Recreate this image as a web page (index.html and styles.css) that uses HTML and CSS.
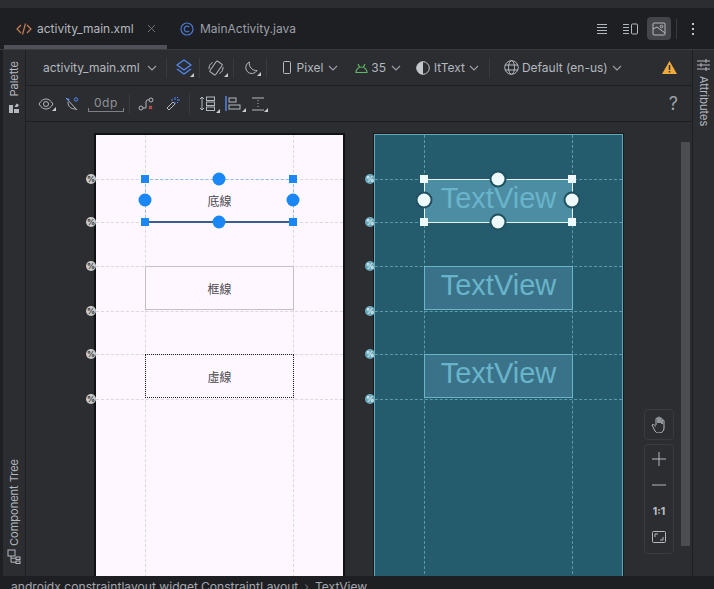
FILE: index.html
```html
<!DOCTYPE html>
<html lang="en">
  <head>
    <meta charset="UTF-8" />
    <title>activity_main.xml</title>
    <link rel="stylesheet" href="styles.css">
  </head>
  <body>
    <div class="top_strip"></div>
    <div class="tabs">
      <div class="tab tab_active">
        <svg class="tab_code" width="16" height="14" viewBox="0 0 16 14"><path d="M5 3 1 7l4 4M11 3l4 4-4 4M9.500 1.500l-3 11"/></svg>
        <span>activity_main.xml</span>
        <svg class="tab_close" width="9" height="9" viewBox="0 0 9 9"><path d="M1 1l7 7M8 1 1 8"/></svg>
      </div>
      <div class="tab tab_java">
        <svg class="tab_class" width="14" height="14" viewBox="0 0 14 14"><circle cx="7" cy="7" r="6"/><path d="M9.200 5.200a2.800 2.800 0 1 0 0 3.600"/></svg>
        <span>MainActivity.java</span>
      </div>
      <div class="tab_tools">
        <svg class="ic" width="12" height="12" viewBox="0 0 12 12"><path d="M1 1.500h10M1 4.500h10M1 7.500h10M1 10.500h10"/></svg>
        <svg class="ic tool_split" width="16" height="12" viewBox="0 0 16 12"><path d="M1 1.500h6M1 4.500h6M1 7.500h6M1 10.500h6"/><rect x="9.500" y="1" width="6" height="10" rx="1"/></svg>
        <div class="tool_active">
          <svg class="ic" width="14" height="14" viewBox="0 0 14 14"><rect x="1" y="1" width="12" height="12" rx="1"/><path d="M1 7l4-2 8 6"/><circle cx="9.500" cy="4.500" r="1.300"/></svg>
        </div>
        <div class="tool_sep"></div>
        <div class="tool_dots"><i></i><i></i><i></i></div>
      </div>
    </div>

    <div class="main">
      <div class="rail rail_left">
        <div class="rail_group">
          <span class="rail_label">Palette</span>
          <svg class="rail_palette" width="12" height="12" viewBox="0 0 12 12"><path d="M1 11V3h4v8zM6 11V7h5v4zM6.500 5l2-3.500 2.500 1.500-1.500 2z"/></svg>
        </div>
        <div class="rail_group rail_group_tree">
          <span class="rail_label">Component Tree</span>
          <svg class="ic rail_tree" width="14" height="15" viewBox="0 0 14 15"><rect x="1" y="1" width="7" height="6"/><rect x="9" y="8" width="4" height="2.500"/><rect x="9" y="12" width="4" height="2.500"/><path d="M4 7v6.200h5M4 9.200h5"/></svg>
        </div>
      </div>

      <div class="center">
        <div class="toolbar">
          <div class="tb tb_file"><span>activity_main.xml</span><svg class="chev" width="10" height="6" viewBox="0 0 10 6"><path d="M1 1l4 4 4-4"/></svg></div>
          <div class="sep"></div>
          <div class="tb tb_layers">
            <svg class="ic_blue" width="16" height="17" viewBox="0 0 16 17"><path d="M8 1l7 5-7 5-7-5zM1 10l7 5 7-5"/></svg>
            <b class="corner"></b>
          </div>
          <div class="sep"></div>
          <div class="tb tb_rotate">
            <svg class="ic" width="16" height="16" viewBox="0 0 16 16"><rect x="4.500" y="1.500" width="7" height="13" rx="1" transform="rotate(35 8 8)"/><path d="M1 9a7 7 0 0 1 3.500-6.500M15 7a7 7 0 0 1-3.500 6.500"/></svg>
            <b class="corner"></b>
          </div>
          <div class="sep"></div>
          <div class="tb tb_moon">
            <svg class="ic" width="14" height="14" viewBox="0 0 14 14"><path d="M5.500 1a6 6 0 1 0 7.500 8.500A7 7 0 0 1 5.500 1z"/></svg>
            <b class="corner"></b>
          </div>
          <div class="sep"></div>
          <div class="tb tb_pixel">
            <svg class="ic" width="8" height="13" viewBox="0 0 8 13"><rect x=".5" y=".5" width="7" height="12" rx="1"/></svg>
            <span>Pixel</span>
            <svg class="chev" width="10" height="6" viewBox="0 0 10 6"><path d="M1 1l4 4 4-4"/></svg>
          </div>
          <div class="tb tb_api">
            <svg class="ic_green" width="13" height="10" viewBox="0 0 13 10"><path d="M1 9.500a5.500 5.500 0 0 1 11 0zM3 1l1.500 3M10 1 8.500 4"/></svg>
            <span>35</span>
            <svg class="chev" width="10" height="6" viewBox="0 0 10 6"><path d="M1 1l4 4 4-4"/></svg>
          </div>
          <div class="tb tb_theme">
            <svg width="14" height="14" viewBox="0 0 14 14"><circle class="half_ring" cx="7" cy="7" r="6.300"/><path class="half_fill" d="M7 .7a6.300 6.300 0 0 0 0 12.600z"/></svg>
            <span>ltText</span>
            <svg class="chev" width="10" height="6" viewBox="0 0 10 6"><path d="M1 1l4 4 4-4"/></svg>
          </div>
          <div class="sep"></div>
          <div class="tb tb_locale">
            <svg class="ic" width="15" height="15" viewBox="0 0 15 15"><circle cx="7.500" cy="7.500" r="6.800"/><ellipse cx="7.500" cy="7.500" rx="3" ry="6.800"/><path d="M1 5h13M1 10h13"/></svg>
            <span>Default (en-us)</span>
            <svg class="chev" width="10" height="6" viewBox="0 0 10 6"><path d="M1 1l4 4 4-4"/></svg>
          </div>
          <svg class="warn" width="15" height="13" viewBox="0 0 15 13"><path class="warn_bg" d="M7.500 0 15 13H0z"/><path class="warn_mark" d="M7.500 4v5M7.500 10v1.500"/></svg>
        </div>

        <div class="toolbar toolbar_second">
          <div class="tb tb_eye">
            <svg class="ic" width="16" height="12" viewBox="0 0 16 12"><path d="M1 6c2-3.500 4.500-5 7-5s5 1.500 7 5c-2 3.500-4.500 5-7 5S3 9.500 1 6z"/><circle cx="8" cy="6" r="2.500"/></svg>
            <b class="corner"></b>
          </div>
          <div class="tb tb_magnet">
            <svg width="14" height="14" viewBox="0 0 14 14"><path class="mag_line" d="M1 1l11 12M3 5c0 5 3 7 8 7"/><path class="mag_tip" d="M1 1l4 1-2 2z"/><circle class="mag_tip_ring" cx="11" cy="2.500" r="1.700"/></svg>
          </div>
          <div class="tb_margin">
            <span>0dp</span>
            <i class="margin_scale"></i>
          </div>
          <div class="sep"></div>
          <div class="tb tb_path">
            <svg width="16" height="14" viewBox="0 0 16 14"><circle class="path_dot" cx="3" cy="11" r="2"/><circle class="path_dot" cx="13" cy="3" r="2"/><path class="path_dot" d="M5 11h3V5a2 2 0 0 1 3-2"/><path class="path_x" d="M11 9l3 3M14 9l-3 3"/></svg>
          </div>
          <div class="tb tb_wand">
            <svg width="14" height="14" viewBox="0 0 14 14"><path class="path_dot" d="M1 11l6-6 2 2-6 6z"/><path class="wand_spark" d="M9 0v3M9 5v2M5 3h2M11 3h3M12 0l-1 1M12 6l-1-1"/></svg>
          </div>
          <div class="sep"></div>
          <div class="tb tb_pack">
            <svg class="ic" width="16" height="16" viewBox="0 0 16 16"><path d="M3 1v13M1 3l2-2 2 2M1 12l2 2 2-2"/><rect x="7.500" y="1" width="8" height="3.500"/><rect x="7.500" y="6" width="8" height="3.500"/><rect x="7.500" y="11" width="8" height="3.500"/></svg>
            <b class="corner"></b>
          </div>
          <div class="tb tb_align">
            <svg width="16" height="15" viewBox="0 0 16 15"><path class="align_bar" d="M1 0v15"/><rect class="path_dot" x="4" y="2" width="7" height="4"/><rect class="path_dot" x="4" y="9" width="11" height="4"/></svg>
            <b class="corner"></b>
          </div>
          <div class="tb tb_guide">
            <svg class="ic" width="14" height="14" viewBox="0 0 14 14"><path d="M1 1h12M7 3v1M7 6v1M7 9v1M1 13h12"/></svg>
            <b class="corner"></b>
          </div>
          <span class="help">?</span>
        </div>

        <div class="canvas">
          <div class="surface device">
            <i class="guide_v col_a"></i><i class="guide_v col_b"></i>
            <i class="guide_h row_1"></i><i class="guide_h row_2"></i><i class="guide_h row_3"></i>
            <i class="guide_h row_4"></i><i class="guide_h row_5"></i><i class="guide_h row_6"></i>
            <i class="pct row_1">%</i><i class="pct row_2">%</i><i class="pct row_3">%</i>
            <i class="pct row_4">%</i><i class="pct row_5">%</i><i class="pct row_6">%</i>

            <div class="widget widget_1 w_under">底線</div>
            <div class="widget widget_2 w_frame">框線</div>
            <div class="widget widget_3 w_dotted">虛線</div>

            <i class="square col_a row_1"></i><i class="square col_b row_1"></i>
            <i class="square col_a row_2"></i><i class="square col_b row_2"></i>
            <i class="dot col_mid row_1"></i><i class="dot col_mid row_2"></i>
            <i class="dot col_a row_mid"></i><i class="dot col_b row_mid"></i>
          </div>

          <div class="surface blueprint">
            <i class="guide_v col_a"></i><i class="guide_v col_b"></i>
            <i class="guide_h row_1"></i><i class="guide_h row_2"></i><i class="guide_h row_3"></i>
            <i class="guide_h row_4"></i><i class="guide_h row_5"></i><i class="guide_h row_6"></i>
            <i class="pct row_1">%</i><i class="pct row_2">%</i><i class="pct row_3">%</i>
            <i class="pct row_4">%</i><i class="pct row_5">%</i><i class="pct row_6">%</i>

            <div class="widget widget_1 bp_selected">TextView</div>
            <div class="widget widget_2">TextView</div>
            <div class="widget widget_3">TextView</div>

            <i class="square col_a row_1"></i><i class="square col_b row_1"></i>
            <i class="square col_a row_2"></i><i class="square col_b row_2"></i>
            <i class="dot col_mid row_1"></i><i class="dot col_mid row_2"></i>
            <i class="dot col_a row_mid"></i><i class="dot col_b row_mid"></i>
          </div>

          <div class="scrollbar"></div>

          <div class="zoom_box zoom_hand">
            <svg class="ic" width="16" height="17" viewBox="0 0 16 17"><path d="M5 9V3a1 1 0 0 1 2 0v4-5a1 1 0 0 1 2 0v5-4a1 1 0 0 1 2 0v5-3a1 1 0 0 1 2 0v7c0 3-2 5-5 5-2 0-3-.500-4-2L1 9c1-1 2-.500 4 1.500"/></svg>
          </div>
          <div class="zoom_box zoom_tools">
            <svg class="ic" width="14" height="14" viewBox="0 0 14 14"><path d="M7 0v14M0 7h14"/></svg>
            <svg class="ic" width="14" height="2" viewBox="0 0 14 2"><path d="M0 1h14"/></svg>
            <span class="zoom_one">1:1</span>
            <svg class="ic" width="14" height="12" viewBox="0 0 14 12"><rect x=".5" y=".5" width="13" height="11" rx="1"/><path d="M3 6V3h3M11 6v3H8"/></svg>
          </div>
        </div>
      </div>

      <div class="rail rail_right">
        <svg class="ic" width="13" height="12" viewBox="0 0 13 12"><path d="M0 2h13M0 6h13M0 10h13M9 0v4M4 4v4M9 8v4"/></svg>
        <span class="rail_label_right">Attributes</span>
      </div>
    </div>

    <div class="statusbar">androidx.constraintlayout.widget.ConstraintLayout<span class="crumb">›</span>TextView</div>
  </body>
</html>
```

FILE: styles.css
```css
* {
  box-sizing: border-box;
}

html,
body {
  margin: 0;
  height: 100%;
}

body {
  width: 714px;
  height: 589px;
  overflow: hidden;
  display: flex;
  flex-direction: column;
  background-color: #1e1f22;
  color: #b4b8bf;
  font-family: "Inter", "Liberation Sans", sans-serif;
  font-size: 12px;
}

svg {
  display: block;
  flex: none;
}

.ic path,
.ic rect,
.ic circle,
.ic ellipse {
  fill: none;
  stroke: #b4b8bf;
  stroke-width: 1;
}

.ic_blue path {
  fill: none;
  stroke: #548af7;
  stroke-width: 1.2;
}

.ic_green path {
  fill: none;
  stroke: #5fb865;
  stroke-width: 1.2;
}

.top_strip {
  height: 8px;
  flex: none;
  background-color: #2b2d30;
}

/* tabs */
.tabs {
  height: 42px;
  flex: none;
  display: flex;
  align-items: flex-start;
  padding-left: 4px;
  background-color: #1e1f22;
  border-bottom: 1px solid #393b40;
}

.tab {
  height: 41px;
  display: flex;
  align-items: center;
}

.tab_active {
  width: 163px;
  padding-left: 12px;
  padding-top: 4px;
  border-bottom: 4px solid #4e5157;
}

.tab_active span {
  margin-left: 5px;
}

.tab_code path {
  fill: none;
  stroke: #c77d55;
  stroke-width: 1.2;
}

.tab_close {
  margin-left: 13px;
}

.tab_close path {
  fill: none;
  stroke: #6f737a;
}

.tab_java {
  padding-left: 13px;
}

.tab_java span {
  margin-left: 6px;
  color: #9da0a8;
}

.tab_class circle,
.tab_class path {
  fill: none;
  stroke: #4a78d0;
  stroke-width: 1.2;
}

.tab_tools {
  margin-left: auto;
  height: 41px;
  display: flex;
  align-items: center;
  padding-right: 20px;
}

.tool_split {
  margin-left: 14px;
}

.tool_active {
  width: 24px;
  height: 23px;
  margin-left: 9px;
  display: flex;
  align-items: center;
  justify-content: center;
  background-color: #43454a;
  border-radius: 4px;
}

.tool_sep {
  width: 1px;
  height: 20px;
  margin-left: 5px;
  background-color: #393b40;
}

.tool_dots {
  margin-left: 15px;
  display: flex;
  flex-direction: column;
  gap: 3px;
}

.tool_dots i {
  width: 2px;
  height: 2px;
  background-color: #c0c3c9;
}

/* main area */
.main {
  flex: 1;
  min-height: 0;
  display: flex;
}

.rail {
  flex: none;
  background-color: #2b2d30;
}

.rail_left {
  margin-left: 3px;
  width: 23px;
  display: flex;
  flex-direction: column;
  justify-content: space-between;
  align-items: center;
  padding: 11px 0 12px;
  border-right: 1px solid #1e1f22;
}

.rail_group {
  display: flex;
  flex-direction: column;
  align-items: center;
  gap: 5px;
}

.rail_group_tree {
  gap: 3px;
}

.rail_label {
  writing-mode: vertical-rl;
  transform: rotate(180deg);
  font-size: 11px;
}

.rail_palette path {
  fill: #b4b8bf;
}

.center {
  flex: 1;
  min-width: 0;
  display: flex;
  flex-direction: column;
}

.rail_right {
  width: 22px;
  display: flex;
  flex-direction: column;
  align-items: center;
  gap: 5px;
  padding-top: 9px;
  border-left: 1px solid #1e1f22;
}

.rail_label_right {
  writing-mode: vertical-rl;
  font-size: 11px;
}

/* toolbars */
.toolbar {
  height: 36px;
  flex: none;
  display: flex;
  align-items: center;
  padding-left: 17px;
  background-color: #2b2d30;
  border-bottom: 1px solid #1e1f22;
}

.tb {
  position: relative;
  display: flex;
  align-items: center;
}

.sep {
  width: 1px;
  height: 20px;
  flex: none;
  background-color: #393b40;
}

.chev path {
  fill: none;
  stroke: #9da0a8;
  stroke-width: 1.1;
}

/* tiny dropdown mark beside an icon */
.corner {
  position: absolute;
  right: 5px;
  bottom: -1px;
  width: 0;
  height: 0;
  border-left: 4px solid transparent;
  border-bottom: 4px solid #c8cad0;
}

.tb_file {
  gap: 7px;
  padding-right: 9px;
}

.tb_layers {
  padding: 0 7px 0 9px;
}

.tb_rotate {
  padding: 0 9px 0 8px;
}

.tb_moon {
  padding: 0 8px 0 10px;
}

.tb_pixel {
  gap: 6px;
  padding-left: 16px;
}

.tb_pixel .chev {
  margin-left: -1px;
}

.tb_api {
  gap: 3px;
  padding-left: 17px;
}

.tb_api .chev {
  margin-left: 2px;
}

.tb_theme {
  gap: 4px;
  padding-left: 15px;
  padding-right: 10px;
}

.half_ring {
  fill: none;
  stroke: #c4c7cc;
  stroke-width: 1;
}

.half_fill {
  fill: #c4c7cc;
}

.tb_locale {
  gap: 3px;
  padding-left: 14px;
}

.tb_locale .chev {
  margin-left: 1px;
}

.warn {
  margin-left: auto;
  margin-right: 15px;
}

.warn_bg {
  fill: #f2a93b;
}

.warn_mark {
  fill: none;
  stroke: #2b2d30;
  stroke-width: 1.5;
}

.toolbar_second {
  padding-left: 12px;
}

.tb_eye {
  padding-right: 11px;
}

.tb_eye .corner {
  right: 9px;
}

.mag_line {
  fill: none;
  stroke: #b4b8bf;
}

.mag_tip {
  fill: #548af7;
}

.mag_tip_ring {
  fill: none;
  stroke: #548af7;
}

.tb_margin {
  position: relative;
  width: 36px;
  margin: 0 5px 0 9px;
  text-align: center;
  font-size: 12px;
  color: #8f9299;
  letter-spacing: 0.6px;
}

.margin_scale {
  display: block;
  height: 4px;
  margin-top: -2px;
  border: 1px solid #7d8087;
  border-top: 0;
}

.tb_path {
  padding: 0 12px 0 8px;
}

.path_dot {
  fill: none;
  stroke: #b4b8bf;
}

.path_x {
  fill: none;
  stroke: #c75450;
  stroke-width: 1.2;
}

.wand_spark {
  fill: none;
  stroke: #548af7;
}

.tb_wand {
  padding-right: 9px;
}

.tb_pack {
  padding: 0 10px 0 9px;
}

.tb_align {
  padding-right: 10px;
}

.align_bar {
  fill: none;
  stroke: #548af7;
  stroke-width: 1.4;
}

.tb_guide .corner {
  right: -3px;
}

.help {
  margin-left: auto;
  margin-right: 14px;
  font-size: 18px;
  color: #9da0a8;
}

/* design canvas */
.canvas {
  position: relative;
  flex: 1;
  min-height: 0;
  display: flex;
  align-items: flex-start;
  padding: 11px 0 0 68px;
  overflow: hidden;
  background-color: #2b2d30;
}

.surface {
  position: relative;
  flex: none;
  width: 251px;
  height: 446px;
  border-style: solid;
}

.device {
  border-width: 2px;
  border-color: #101112;
  background-color: #fef7ff;
  color: #4a4a4e;
  --guide: #dcd8de;
}

.blueprint {
  width: 249px;
  margin: 1px 0 0 29px;
  border-width: 1px;
  border-color: #62a9bd;
  box-shadow: 0 0 0 1px #17191b;
  background-color: #245c6e;
  color: #69b4ca;
  --guide: #5a9aad;
}

.guide_v {
  position: absolute;
  top: 0;
  bottom: 0;
  width: 0;
  border-left: 1px dashed var(--guide);
}

.guide_h {
  position: absolute;
  left: 0;
  right: 0;
  height: 0;
  border-top: 1px dashed var(--guide);
}

.col_a {
  left: 49px;
}

.col_mid {
  left: 123px;
}

.col_b {
  left: 197px;
}

.row_1 {
  top: 44px;
}

.row_mid {
  top: 65px;
}

.row_2 {
  top: 87px;
}

.row_3 {
  top: 131px;
}

.row_4 {
  top: 176px;
}

.row_5 {
  top: 219px;
}

.row_6 {
  top: 264px;
}

.pct {
  position: absolute;
  left: -10px;
  width: 10px;
  height: 10px;
  margin-top: -5px;
  border-radius: 50%;
  background-color: #c9c9c9;
  color: #333;
  font-size: 8px;
  font-style: normal;
  font-weight: 700;
  line-height: 10px;
  text-align: center;
}

.blueprint .pct {
  background-color: #6aa8ba;
  color: #e4f3f7;
}

.widget {
  position: absolute;
  left: 49px;
  width: 149px;
  display: flex;
  align-items: center;
  justify-content: center;
}

.widget_1 {
  top: 44px;
  height: 44px;
}

.widget_2 {
  top: 131px;
  height: 44px;
}

.widget_3 {
  top: 219px;
  height: 44px;
}

.device .widget {
  font-family: "Noto Sans CJK TC", sans-serif;
  font-size: 12px;
}

.w_under {
  border: 1px dashed #8fbcee;
  border-bottom: 2px solid #3a5f8c;
}

.w_frame {
  border: 1px solid #c4c1c6;
}

.w_dotted {
  border: 1px dotted #222;
}

.blueprint .widget {
  padding-bottom: 6px;
  border: 1px solid #6bb3c7;
  background-color: #3a7389;
  font-family: "Liberation Sans", sans-serif;
  font-size: 29px;
}

.blueprint .bp_selected {
  border-color: #e6f4f8;
  background-color: #4d8da3;
}

.square {
  position: absolute;
  width: 8px;
  height: 8px;
  transform: translate(-50%, -50%);
  background-color: #1a87f5;
}

.dot {
  position: absolute;
  width: 13px;
  height: 13px;
  transform: translate(-50%, -50%);
  border-radius: 50%;
  background-color: #1a87f5;
}

.blueprint .square {
  background-color: #eef9fc;
}

.blueprint .dot {
  background-color: #eef9fc;
  box-shadow: 0 0 0 2px #1f5060;
}

.scrollbar {
  position: absolute;
  left: 655px;
  top: 20px;
  width: 9px;
  height: 404px;
  background-color: #4b4d50;
}

.zoom_box {
  position: absolute;
  left: 618px;
  width: 30px;
  display: flex;
  flex-direction: column;
  align-items: center;
  border: 1px solid #393b40;
  border-radius: 4px;
  background-color: #2b2d30;
}

.zoom_hand {
  top: 287px;
  height: 31px;
  justify-content: center;
}

.zoom_tools {
  top: 322px;
  height: 110px;
  padding-top: 7px;
  gap: 18px;
}

.zoom_one {
  margin: 2px 0 -3px;
  font-size: 10px;
  font-weight: 800;
  line-height: 10px;
}

/* bottom crumb line */
.statusbar {
  height: 13px;
  flex: none;
  padding: 3px 0 0 11px;
  overflow: hidden;
  background-color: #1e1f22;
  color: #a4a7ae;
  font-size: 12.1px;
  line-height: 16px;
  white-space: nowrap;
}

.crumb {
  margin: 0 6px;
  color: #6f737a;
}
```
